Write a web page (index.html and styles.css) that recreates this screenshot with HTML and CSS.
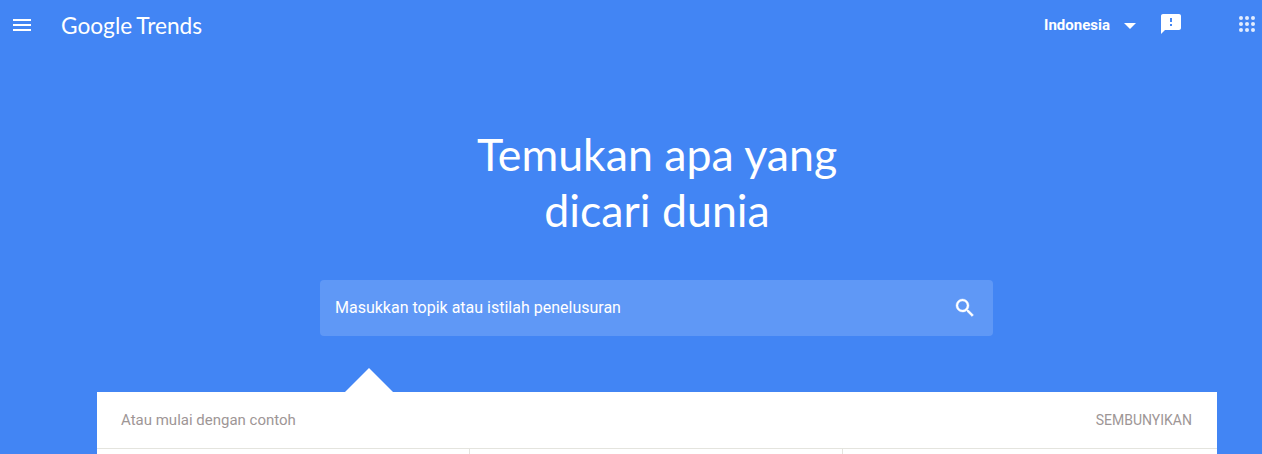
FILE: index.html
```html
<!DOCTYPE html>
<html lang="id">
  <head>
    <meta charset="UTF-8" />
    <title>Google Trends</title>
    <link rel="stylesheet" href="styles.css">
  </head>
  <body>
    <header class="top-bar">
      <svg class="menu-icon" width="18" height="12" viewBox="0 0 18 12"><path d="M0 0h18v2H0zM0 5h18v2H0zM0 10h18v2H0z" fill="#fff"/></svg>
      <div class="logo"><span class="logo-google">Google</span><span class="logo-trends">Trends</span></div>
      <div class="top-actions">
        <span class="country">Indonesia</span>
        <span class="caret"></span>
        <svg class="feedback-icon" width="20" height="20" viewBox="2 2 20 20"><path d="M20 2H4c-1.1 0-2 .9-2 2v18l4-4h14c1.1 0 2-.9 2-2V4c0-1.100-.9-2-2-2zm-7 12h-2v-2h2v2zm0-4h-2V6h2v4z" fill="#fff"/></svg>
        <svg class="apps-icon" width="16" height="16" viewBox="0 0 16 16" fill="#fff" fill-opacity="0.85">
          <circle cx="2" cy="2" r="2"/><circle cx="8" cy="2" r="2"/><circle cx="14" cy="2" r="2"/>
          <circle cx="2" cy="8" r="2"/><circle cx="8" cy="8" r="2"/><circle cx="14" cy="8" r="2"/>
          <circle cx="2" cy="14" r="2"/><circle cx="8" cy="14" r="2"/><circle cx="14" cy="14" r="2"/>
        </svg>
      </div>
    </header>

    <main class="content">
      <h1>Temukan apa yang<br>dicari dunia</h1>
      <div class="search-box">
        <span class="search-text">Masukkan topik atau istilah penelusuran</span>
        <svg width="24" height="24" viewBox="0 0 24 24"><path d="M15.500 14h-.79l-.28-.27A6.470 6.470 0 0 0 16 9.500 6.500 6.500 0 1 0 9.500 16c1.610 0 3.090-.59 4.230-1.570l.27.28v.79l5 4.990L20.490 19l-4.990-5zm-6 0C7.010 14 5 11.990 5 9.500S7.010 5 9.500 5 14 7.010 14 9.500 11.990 14 9.500 14z" fill="#fff" stroke="#fff" stroke-width="0.4"/></svg>
      </div>
      <div class="notch-row"><div class="notch"></div></div>
      <section class="examples">
        <div class="examples-head">
          <span class="examples-title">Atau mulai dengan contoh</span>
          <span class="examples-hide">SEMBUNYIKAN</span>
        </div>
        <div class="examples-grid">
          <div class="example-cell"></div>
          <div class="example-cell"></div>
          <div class="example-cell"></div>
        </div>
      </section>
    </main>
  </body>
</html>
```

FILE: styles.css
```css
html, body {
  margin: 0;
  padding: 0;
  height: 454px;
  overflow: hidden;
}

body {
  background-color: #4285f4;
  color: #fff;
  font-family: 'Roboto', sans-serif;
}

.top-bar {
  display: flex;
  align-items: center;
  height: 50px;
  padding: 0 7px 0 13px;
}

.menu-icon {
  margin-right: 30px;
}

.logo {
  display: flex;
  gap: 4px;
  font-family: 'Lato', sans-serif;
  font-size: 22.7px;
}

.top-actions {
  display: flex;
  align-items: center;
  margin-left: auto;
}

.country {
  font-size: 15px;
  font-weight: 700;
}

.caret {
  width: 0;
  height: 0;
  border-left: 6px solid transparent;
  border-right: 6px solid transparent;
  border-top: 6px solid #fff;
  margin: 2px 0 0 14px;
}

.feedback-icon {
  margin: 0 0 2px 25px;
}

.apps-icon {
  margin: 0 0 2px 58px;
}

.content {
  width: 1120px;
  margin-left: 97px;
}

h1 {
  margin: 76px 0 0;
  font-family: 'Lato', sans-serif;
  font-size: 44.7px;
  font-weight: 400;
  line-height: 56px;
  text-align: center;
}

.search-box {
  display: flex;
  align-items: center;
  justify-content: space-between;
  box-sizing: border-box;
  width: 673px;
  height: 56px;
  margin: 42px 0 0 223px;
  padding: 0 16px 0 15px;
  background-color: #5f98f6;
  border-radius: 4px;
  font-size: 16px;
}

.search-text {
  padding-bottom: 2px;
}

.notch-row {
  height: 24px;
  margin-top: 32px;
}

.notch {
  width: 48px;
  height: 24px;
  margin-left: 248px;
  background-color: #fff;
  clip-path: polygon(50% 0, 100% 100%, 0 100%);
}

.examples {
  background-color: #fff;
}

.examples-head {
  display: flex;
  align-items: center;
  justify-content: space-between;
  height: 56px;
  padding: 0 25px 0 24px;
  border-bottom: 1px solid #e4e4de;
  font-size: 14px;
  color: #9e9696;
}

.examples-title {
  font-size: 15px;
}

.examples-grid {
  display: grid;
  grid-template-columns: repeat(3, 373px);
  height: 5px;
}

.example-cell {
  border-right: 1px solid #e4e4de;
}

.example-cell:last-child {
  border-right: 0;
}
```
